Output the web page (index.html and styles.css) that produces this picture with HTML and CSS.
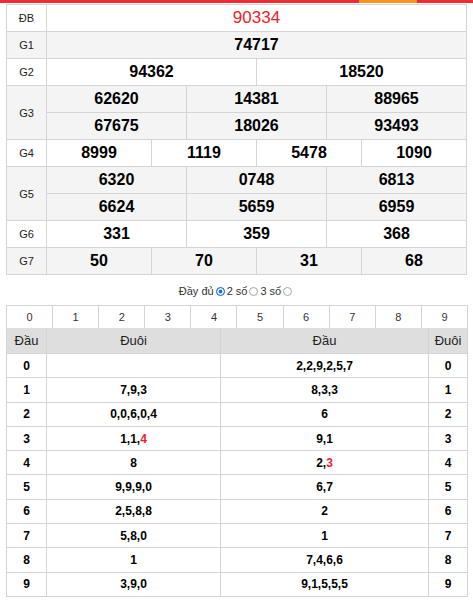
FILE: index.html
```html
<!DOCTYPE html>
<html lang="vi">
<head>
<meta charset="utf-8">
<title>Kết quả xổ số</title>
<link rel="stylesheet" href="styles.css">
</head>
<body>
<div class="topbar"><span class="seg red-a"></span><span class="seg orange"></span><span class="seg red-b"></span></div>
<div class="wrap">
  <div class="kq">
    <div class="lbl w">ĐB</div>
    <div class="num s12 w red">90334</div>

    <div class="lbl g">G1</div>
    <div class="num s12 g">74717</div>

    <div class="lbl w">G2</div>
    <div class="num s6 w">94362</div>
    <div class="num s6 w">18520</div>

    <div class="lbl r2 g">G3</div>
    <div class="num s4 g">62620</div>
    <div class="num s4 g">14381</div>
    <div class="num s4 g">88965</div>
    <div class="num s4 g">67675</div>
    <div class="num s4 g">18026</div>
    <div class="num s4 g">93493</div>

    <div class="lbl w">G4</div>
    <div class="num s3 w">8999</div>
    <div class="num s3 w">1119</div>
    <div class="num s3 w">5478</div>
    <div class="num s3 w">1090</div>

    <div class="lbl r2 g">G5</div>
    <div class="num s4 g">6320</div>
    <div class="num s4 g">0748</div>
    <div class="num s4 g">6813</div>
    <div class="num s4 g">6624</div>
    <div class="num s4 g">5659</div>
    <div class="num s4 g">6959</div>

    <div class="lbl w">G6</div>
    <div class="num s4 w">331</div>
    <div class="num s4 w">359</div>
    <div class="num s4 w">368</div>

    <div class="lbl g">G7</div>
    <div class="num s3 g">50</div>
    <div class="num s3 g">70</div>
    <div class="num s3 g">31</div>
    <div class="num s3 g">68</div>
  </div>

  <div class="opts">
    <span>Đầy đủ</span><span class="radio on"></span>
    <span>2 số</span><span class="radio"></span>
    <span>3 số</span><span class="radio"></span>
  </div>

  <div class="digits">
    <div class="d">0</div><div class="d">1</div><div class="d">2</div><div class="d">3</div><div class="d">4</div>
    <div class="d">5</div><div class="d">6</div><div class="d">7</div><div class="d">8</div><div class="d">9</div>
  </div>

  <div class="loto">
    <div class="h">Đầu</div><div class="h">Đuôi</div><div class="h">Đầu</div><div class="h">Đuôi</div>

    <div class="c">0</div><div class="c"></div><div class="c">2,2,9,2,5,7</div><div class="c">0</div>
    <div class="c">1</div><div class="c">7,9,3</div><div class="c">8,3,3</div><div class="c">1</div>
    <div class="c">2</div><div class="c">0,0,6,0,4</div><div class="c">6</div><div class="c">2</div>
    <div class="c">3</div><div class="c">1,1,<span class="red">4</span></div><div class="c">9,1</div><div class="c">3</div>
    <div class="c">4</div><div class="c">8</div><div class="c">2,<span class="red">3</span></div><div class="c">4</div>
    <div class="c">5</div><div class="c">9,9,9,0</div><div class="c">6,7</div><div class="c">5</div>
    <div class="c">6</div><div class="c">2,5,8,8</div><div class="c">2</div><div class="c">6</div>
    <div class="c">7</div><div class="c">5,8,0</div><div class="c">1</div><div class="c">7</div>
    <div class="c">8</div><div class="c">1</div><div class="c">7,4,6,6</div><div class="c">8</div>
    <div class="c">9</div><div class="c">3,9,0</div><div class="c">9,1,5,5,5</div><div class="c">9</div>
  </div>
</div>
</body>
</html>
```

FILE: styles.css
```css
* { box-sizing: border-box; }
html, body { margin: 0; padding: 0; background: #fff; }
body {
  font-family: "Liberation Sans", Arial, sans-serif;
  color: #000;
}
.topbar { display: flex; height: 3px; }
.seg { display: block; height: 3px; }
.red-a { width: 359px; background: #ef2b33; }
.orange { width: 58px; background: #f7941d; }
.red-b { flex: 1; background: #ef2b33; }

.wrap { padding: 1px 6px 0 6px; }

.kq {
  display: grid;
  grid-template-columns: 39px repeat(12, 1fr);
  grid-auto-rows: 26px;
  gap: 1px;
  padding: 1px;
  background: #d4d4d4;
  width: 461px;
}
.kq > div { display: flex; align-items: center; justify-content: center; }
.w { background: #fff; }
.g { background: #f4f4f4; }
.lbl { font-size: 11px; color: #222; }
.r2 { grid-row: span 2; }
.num { font-size: 16px; font-weight: bold; color: #000; }
.s12 { grid-column: span 12; }
.s6 { grid-column: span 6; }
.s4 { grid-column: span 4; }
.s3 { grid-column: span 3; }
.red { color: #ee1c25; }
.num.red { font-size: 17px; font-weight: normal; }

.opts {
  height: 30px;
  display: flex;
  align-items: center;
  justify-content: center;
  font-size: 11px;
  color: #333;
  padding-top: 2px;
}
.radio {
  display: inline-block;
  width: 9px;
  height: 9px;
  border-radius: 50%;
  border: 1px solid #a6a6a6;
  background: #fff;
  margin: 0 2px 0 2px;
}
.radio.on {
  border-color: #1a73e8;
  background: #1a73e8;
  box-shadow: inset 0 0 0 1.5px #fff;
}

.digits {
  display: grid;
  grid-template-columns: repeat(10, 1fr);
  grid-auto-rows: 22px;
  gap: 1px;
  padding: 1px 1px 0 1px;
  background: #d4d4d4;
  width: 462px;
}
.d {
  background: #fff;
  display: flex;
  align-items: center;
  justify-content: center;
  font-size: 11px;
  color: #333;
}

.loto {
  display: grid;
  grid-template-columns: 39px 173px 207px 1fr;
  grid-template-rows: 25px;
  grid-auto-rows: 23.3px;
  gap: 1px;
  padding: 0 1px 1px 1px;
  background: #d4d4d4;
  width: 462px;
}
.loto > div {
  display: flex;
  align-items: center;
  justify-content: center;
  font-size: 12px;
  font-weight: bold;
}
.h { background: #dedede; color: #222; font-weight: normal !important; font-size: 13px !important; }
.c { background: #fff; color: #000; }
.c .red { color: #ee1c25; }
```
